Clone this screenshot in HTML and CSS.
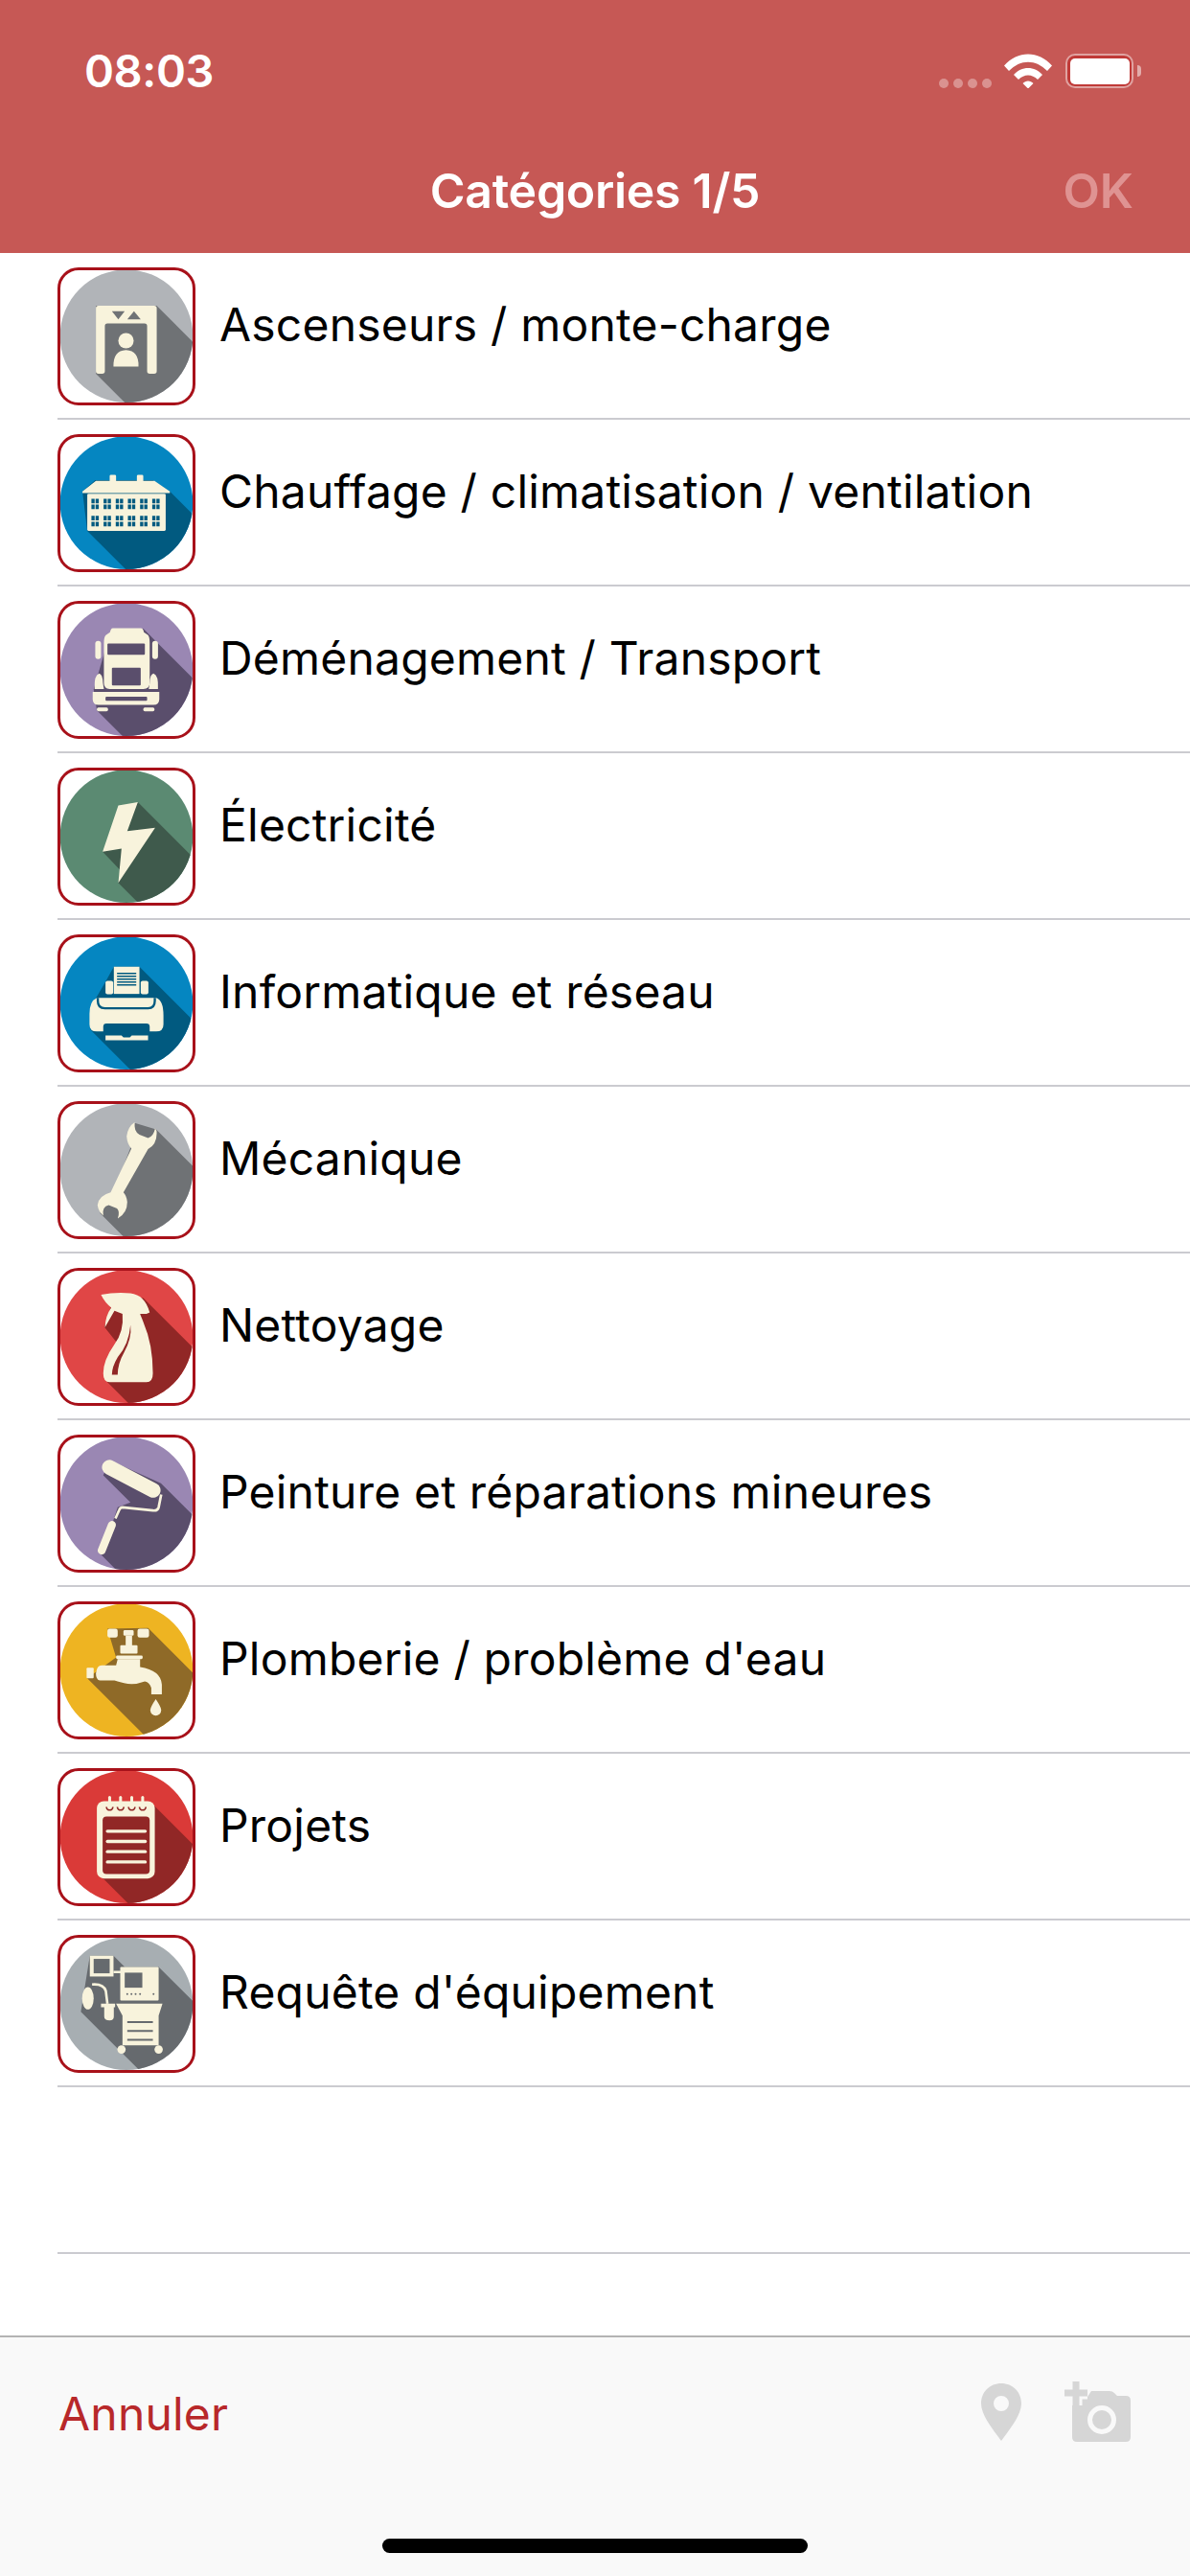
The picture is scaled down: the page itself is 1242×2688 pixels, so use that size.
FILE: index.html
```html
<!DOCTYPE html>
<html lang="fr">
<head>
<meta charset="utf-8">
<title>Catégories</title>
<link rel="stylesheet" href="styles.css">
</head>
<body>
<svg class="defs" width="0" height="0" aria-hidden="true"><defs><clipPath id="disc"><circle cx="215.500" cy="214.500" r="207.500"/></clipPath></defs></svg>
<div class="app">
  <header class="header">
    <div class="status">
      <span class="time">08:03</span>
      <div class="status-icons">
        <div class="signal"><i></i><i></i><i></i><i></i></div>
        <svg class="wifi" viewBox="0 0 50 36"><path d="M0 12.500C14-3.500 36-3.500 50 12.500l-5 5.500C33 5.500 17 5.500 5 18Z"/><path d="M10 22C18 12.500 32 12.500 40 22l-5 5C29 21 21 21 15 27Z"/><path d="M19.500 31C22.500 27.500 27.500 27.500 30.500 31L25 36.500Z"/></svg>
        <div class="battery"><div class="battery-fill"></div></div>
        <div class="battery-cap"></div>
      </div>
    </div>
    <div class="nav">
      <span class="nav-title">Catégories 1/5</span>
      <span class="nav-ok">OK</span>
    </div>
  </header>

  <main class="list">
    <div class="row">
      <div class="icon"><svg viewBox="0 0 428 428"><circle class="c-grey" cx="215.500" cy="214.500" r="207.500"/><g clip-path="url(#disc)"><g transform="translate(-62,-43)">
        <polygon class="s-grey" points="182,163 372,163 660,451 660,660 467,660 182,375"/>
        <path class="g" d="M190 163H364q8 0 8 8V367q0 8-8 8H350q-8 0-8-8V226q0-8-8-8H218q-8 0-8 8V367q0 8-8 8H190q-8 0-8-8V171q0-8 8-8Z"/>
        <polygon class="s-grey" points="232,180 272,180 252,205"/><polygon class="s-grey" points="280,205 322,205 301,180"/>
        <circle class="g" cx="276" cy="272" r="24"/><path class="g" d="M237 353q-2-50 39-52q41 2 39 52Z"/>
      </g></g></svg></div>
      <span class="label">Ascenseurs / monte-charge</span>
    </div>
    <div class="row">
      <div class="icon"><svg viewBox="0 0 428 428"><circle class="c-blue" cx="215.500" cy="214.500" r="207.500"/><g clip-path="url(#disc)"><g transform="translate(-62,-566)">
        <polygon class="s-blue" points="140,745 180,710 360,710 413,745 700,1032 700,1100 387,1100 155,868"/>
        <path class="g" d="M140 745L182 712H225V697q0-4 4-4h12q4 0 4 4V712H310V697q0-4 4-4h12q4 0 4 4V712H365L413 745V750H140Z"/>
        <rect class="g" x="155" y="752" width="245" height="116" rx="4"/>
        <g class="win"><path d="M168 775H388"/><path d="M168 793H388"/><path d="M168 828H388"/><path d="M168 847H388"/></g>
      </g></g></svg></div>
      <span class="label">Chauffage / climatisation / ventilation</span>
    </div>
    <div class="row">
      <div class="icon"><svg viewBox="0 0 428 428"><circle class="c-purple" cx="215.500" cy="214.500" r="207.500"/><g clip-path="url(#disc)"><g transform="translate(-62,-53)">
        <polygon class="s-purple" points="230,140 330,140 735,545 585,795 185,395 175,330"/>
        <path class="g" d="M235 138H322q8 0 10 13L345 160Q350 165 350 185V310Q350 328 330 328H225Q207 328 207 310V185Q207 165 213 160L226 151Q228 138 235 138Z"/>
        <rect class="s-purple" x="218" y="186" width="117" height="35" rx="3"/>
        <rect class="s-purple" x="232" y="262" width="90" height="55" rx="3"/>
        <rect class="g" x="180" y="178" width="18" height="57" rx="9"/><rect class="g" x="358" y="178" width="18" height="57" rx="9"/>
        <path class="g" d="M178 328Q176 285 192 280Q203 282 204 310L207 328Z"/><path class="g" d="M376 328Q378 285 362 280Q351 282 350 310L347 328Z"/>
        <path class="g" d="M172 337H380V360Q380 378 362 378H190Q172 378 172 360Z"/>
        <rect class="s-purple" x="212" y="352" width="130" height="13" rx="3"/>
        <rect class="g" x="185" y="386" width="35" height="12" rx="5"/><rect class="g" x="330" y="386" width="35" height="12" rx="5"/>
      </g></g></svg></div>
      <span class="label">Déménagement / Transport</span>
    </div>
    <div class="row">
      <div class="icon"><svg viewBox="0 0 428 428"><circle class="c-green" cx="215.500" cy="214.500" r="207.500"/><g clip-path="url(#disc)"><g transform="translate(-62,-575)">
        <polygon class="s-green" points="313,683 713,1083 652,1335 252,935 258,895 203,838"/>
        <polygon class="g" points="252,693 313,683 280,773 367,763 252,935 262,828 203,838"/>
      </g></g></svg></div>
      <span class="label">Électricité</span>
    </div>
    <div class="row">
      <div class="icon"><svg viewBox="0 0 428 428"><circle class="c-blue" cx="215.500" cy="214.500" r="207.500"/><g clip-path="url(#disc)"><g transform="translate(-62,-77)">
        <polygon class="s-blue" points="238,178 318,178 718,578 565,775 165,375 180,280 212,225"/>
        <rect class="g" x="212" y="222" width="24" height="42" rx="6"/><rect class="g" x="322" y="222" width="24" height="42" rx="6"/>
        <rect class="g" x="238" y="178" width="80" height="85"/>
        <g class="plines"><path d="M248 199H308"/><path d="M248 208H308"/><path d="M248 217H308"/><path d="M248 226H308"/><path d="M248 235H308"/></g>
        <path class="g" d="M185 275H370Q393 282 393 330V358Q393 380 370 380H350V365Q350 355 340 355H215Q205 355 205 365V380H185Q162 380 162 358V325Q162 285 185 275Z"/>
        <path class="pcurve" d="M188 275V285Q188 308 210 308H345Q366 308 366 285V275"/>
        <path class="g" d="M212 393H262l6 6h20l6-6H345V408H212Z"/>
      </g></g></svg></div>
      <span class="label">Informatique et réseau</span>
    </div>
    <div class="row">
      <div class="icon"><svg viewBox="0 0 428 428"><circle class="c-grey" cx="215.500" cy="214.500" r="207.500"/><g clip-path="url(#disc)"><g transform="translate(-62,-600)">
        <polygon class="s-grey" points="303,668 370,688 770,1088 595,1350 195,950 250,850 300,720"/>
        <path class="g" d="M303 666Q282 680 278 710Q280 735 293 748L228 885Q190 895 187 925Q190 945 205 958Q200 930 222 925L248 935Q258 945 250 967Q280 950 280 915Q278 895 268 885L345 750Q372 735 372 700Q372 690 367 685Q362 710 345 715L318 705Q300 695 303 666Z"/>
      </g></g></svg></div>
      <span class="label">Mécanique</span>
    </div>
    <div class="row">
      <div class="icon"><svg viewBox="0 0 428 428"><circle class="c-red" cx="215.500" cy="214.500" r="207.500"/><g clip-path="url(#disc)"><g transform="translate(-62,-101)">
        <polygon class="s-red" points="240,190 330,195 730,595 615,855 215,455 260,350 208,285"/>
        <path class="g" d="M198 185Q240 176 290 180Q335 185 350 240L340 245H320Q322 250 330 270Q360 340 360 430Q360 458 340 458H225Q205 458 205 430Q205 390 240 340Q270 300 265 245L240 235L210 287Q212 250 230 225Q210 210 198 185Z"/>
        <path class="s-red" d="M290 280Q285 340 250 380Q232 410 232 435H250Q250 400 270 365Q295 320 290 280Z"/>
      </g></g></svg></div>
      <span class="label">Nettoyage</span>
    </div>
    <div class="row">
      <div class="icon"><svg viewBox="0 0 428 428"><circle class="c-purple" cx="215.500" cy="214.500" r="207.500"/><g clip-path="url(#disc)"><g transform="translate(-62,-623)">
        <polygon class="s-purple" points="225,703 385,775 785,1175 590,1390 190,990 235,895 250,850 290,835 205,750"/>
        <path class="r-handle" d="M224 725L361 797"/>
        <path class="r-wire" d="M386 810L378 850Q375 862 360 860L265 850Q258 850 255 858L243 885"/>
        <path class="r-grip" d="M232 905L200 985"/>
      </g></g></svg></div>
      <span class="label">Peinture et réparations mineures</span>
    </div>
    <div class="row">
      <div class="icon"><svg viewBox="0 0 428 428"><circle class="c-yellow" cx="215.500" cy="214.500" r="207.500"/><g clip-path="url(#disc)"><g transform="translate(-62,-125)">
        <polygon class="s-yellow" points="218,210 345,208 745,608 555,765 155,365 245,300"/>
        <rect class="g" x="218" y="210" width="32" height="28" rx="7"/><rect class="g" x="268" y="215" width="32" height="17" rx="4"/><rect class="g" x="312" y="210" width="36" height="28" rx="7"/>
        <rect class="g" x="275" y="232" width="20" height="34"/><rect class="g" x="258" y="262" width="54" height="26" rx="3"/>
        <rect class="g" x="245" y="294" width="83" height="11" rx="4"/>
        <path class="g" d="M250 305H320V330Q385 340 388 385V415H355V395Q350 378 335 375Q300 388 270 380Q250 375 240 372H195Q182 370 182 350Q185 325 200 325H245Z"/>
        <rect class="g" x="153" y="332" width="22" height="33" rx="3"/>
        <path class="g" d="M369 430Q352 455 352 465A17 17 0 0 0 386 465Q386 455 369 430Z"/>
      </g></g></svg></div>
      <span class="label">Plomberie / problème d'eau</span>
    </div>
    <div class="row">
      <div class="icon"><svg viewBox="0 0 428 428"><circle class="c-crimson" cx="215.500" cy="214.500" r="207.500"/><g clip-path="url(#disc)"><g transform="translate(-62,-47)">
        <polygon class="s-red" points="195,155 365,165 765,565 605,792 205,392"/>
        <rect class="g" x="185" y="150" width="181" height="242" rx="22"/>
        <rect class="s-red" x="203" y="198" width="147" height="180" rx="12"/>
        <g class="n-lines"><path d="M218 244H336"/><path d="M218 276H336"/><path d="M218 308H336"/><path d="M218 340H336"/></g>
        <g class="n-rings"><path d="M225 138V165"/><path d="M259 138V165"/><path d="M294 138V165"/><path d="M328 138V165"/></g>
        <g class="n-holes"><path d="M215 168a10 10 0 0 0 20 0"/><path d="M249 168a10 10 0 0 0 20 0"/><path d="M284 168a10 10 0 0 0 20 0"/><path d="M318 168a10 10 0 0 0 20 0"/></g>
      </g></g></svg></div>
      <span class="label">Projets</span>
    </div>
    <div class="row">
      <div class="icon"><svg viewBox="0 0 428 428"><circle class="c-steel" cx="215.500" cy="214.500" r="207.500"/><g clip-path="url(#disc)"><g transform="translate(-62,-570)">
        <polygon class="s-steel" points="163,635 237,635 272,670 378,670 778,1070 535,1210 135,810"/>
        <rect class="g" x="163" y="635" width="74" height="65"/><rect class="s-steel" x="175" y="645" width="50" height="45"/>
        <path class="e-tube" d="M237 686H260"/>
        <rect class="g" x="258" y="670" width="120" height="105" rx="3"/>
        <rect class="s-steel" x="272" y="688" width="55" height="47"/>
        <g class="e-dots"><circle cx="280" cy="755" r="3"/><circle cx="293" cy="755" r="3"/><circle cx="306" cy="755" r="3"/><circle cx="320" cy="755" r="3"/><circle cx="362" cy="755" r="3"/></g>
        <path class="g" d="M245 785H390L378 822V915H265V822Z"/>
        <g class="e-lines"><path d="M280 842H360"/><path d="M280 870H360"/><path d="M280 898H360"/></g>
        <circle class="g" cx="262" cy="928" r="13"/><circle class="g" cx="378" cy="928" r="13"/>
        <ellipse class="g" cx="157" cy="768" rx="18" ry="35"/>
        <path class="e-tube" d="M170 725Q205 722 213 745L218 785"/>
        <path class="g" d="M198 785H242V796H238V825Q238 837 225 837Q208 837 208 825V796H198Z"/>
      </g></g></svg></div>
      <span class="label">Requête d'équipement</span>
    </div>
    <div class="row"></div>
  </main>

  <footer class="toolbar">
    <span class="cancel">Annuler</span>
    <div class="tools">
      <svg class="pin" viewBox="0 0 42 60"><path fill-rule="evenodd" d="M21 0C9 0 0 9 0 21C0 34 14 50 21 60C28 50 42 34 42 21C42 9 33 0 21 0ZM21 13a8 8 0 1 1 0 16a8 8 0 1 1 0-16Z"/></svg>
      <svg class="camera" viewBox="0 0 70 64"><path d="M8 22Q8 16 14 16H24L28 10H47Q50 10 52 12L55 15H64Q69 15 69 20V58Q69 63 64 63H13Q8 63 8 58Z"/><path class="cam-gap" d="M12 0V25M0 12H24"/><path class="cam-plus" d="M12 0V25M0 12H24"/><circle class="cam-ring" cx="39" cy="40" r="12.500"/></svg>
    </div>
    <div class="home"></div>
  </footer>
</div>
</body>
</html>
```
FILE: styles.css
```css
* { box-sizing: border-box; }
html, body { margin: 0; padding: 0; background: #fff; }
body { font-family: Inter, Roboto, "Liberation Sans", sans-serif; color: #000; }
.defs { position: absolute; }
.app { width: 1242px; height: 2688px; display: flex; flex-direction: column; overflow: hidden; }

.header { height: 264px; background: #c65855; color: #fff; display: flex; flex-direction: column; flex: none; }
.status { height: 169px; padding: 50px 51px 0 88px; display: flex; justify-content: space-between; align-items: flex-start; }
.time { font-size: 47px; font-weight: 600; line-height: 48px; letter-spacing: -0.4px; }
.status-icons { display: flex; align-items: flex-start; padding-top: 6px; }
.signal { display: flex; gap: 5px; margin: 26px 13px 0 0; }
.signal i { width: 10px; height: 10px; border-radius: 50%; background: rgba(255,255,255,.35); }
.wifi { width: 50px; height: 36px; fill: #fff; margin-right: 14px; }
.battery { width: 71px; height: 36px; border: 2.5px solid rgba(255,255,255,.45); border-radius: 10px; padding: 2.5px; background: #c03a38; background-clip: padding-box; }
.battery-fill { width: 100%; height: 100%; background: #fff; border-radius: 5px; }
.battery-cap { width: 4px; height: 12px; margin: 12px 0 0 4px; background: rgba(255,255,255,.5); border-radius: 0 4px 4px 0; }

.nav { position: relative; display: flex; justify-content: center; }
.nav-title { font-size: 50px; font-weight: 600; line-height: 60px; letter-spacing: -0.3px; }
.nav-ok { position: absolute; right: 59px; top: 0; font-size: 50px; font-weight: 600; line-height: 60px; color: #df9392; }

.list { flex: 1; }
.row { height: 174px; margin-left: 60px; display: flex; align-items: center; border-bottom: 2px solid #cbcbd0; }
.icon { width: 144px; height: 144px; flex: none; border: 3px solid #a8111a; border-radius: 22px; margin-top: 1px; overflow: hidden; background: #fff; }
.icon svg { display: block; width: 143px; height: 143px; margin: -3px; }
.label { font-size: 48px; line-height: 60px; margin: 0 0 22px 25px; letter-spacing: 0.2px; white-space: nowrap; }

.g { fill: #f8f3dc; }
.c-grey { fill: #b1b4b8; } .s-grey { fill: #6f7275; }
.c-blue { fill: #0586c1; } .s-blue { fill: #015a80; }
.c-purple { fill: #9a87b3; } .s-purple { fill: #5a4e6c; }
.c-green { fill: #5b8a72; } .s-green { fill: #3f5a4c; }
.c-red { fill: #e04646; } .s-red { fill: #912726; }
.c-crimson { fill: #da3a38; }
.c-yellow { fill: #eeb422; } .s-yellow { fill: #8f6a28; }
.c-steel { fill: #a7aeb2; } .s-steel { fill: #666a6e; }

.win { fill: none; stroke: #015a80; stroke-width: 14; stroke-dasharray: 10 3 10 15; }
.plines { fill: none; stroke: #015a80; stroke-width: 4; }
.pcurve { fill: none; stroke: #015a80; stroke-width: 7; }
.r-handle { fill: none; stroke: #f8f3dc; stroke-width: 46; stroke-linecap: round; }
.r-wire { fill: none; stroke: #f8f3dc; stroke-width: 8; }
.r-grip { fill: none; stroke: #f8f3dc; stroke-width: 25; stroke-linecap: round; }
.n-lines { fill: none; stroke: #f8f3dc; stroke-width: 10; stroke-linecap: round; }
.n-rings { fill: none; stroke: #f8f3dc; stroke-width: 9; stroke-linecap: round; }
.n-holes { fill: none; stroke: #912726; stroke-width: 5; }
.e-tube { fill: none; stroke: #f8f3dc; stroke-width: 8; }
.e-dots { fill: #666a6e; }
.e-lines { fill: none; stroke: #666a6e; stroke-width: 6; }

.toolbar { position: relative; flex: none; height: 251px; background: #f9f9f9; border-top: 2px solid #b3b3b3; padding: 46px 61px 0 61px; display: flex; justify-content: space-between; align-items: flex-start; }
.cancel { font-size: 48px; line-height: 60px; color: #b8282a; margin-top: 4px; letter-spacing: 0.2px; }
.tools { display: flex; align-items: flex-start; gap: 45px; }
.pin { width: 42px; height: 60px; fill: #d6d6d6; margin-top: 2px; }
.camera { width: 70px; height: 64px; fill: #d6d6d6; }
.cam-gap { fill: none; stroke: #f9f9f9; stroke-width: 13; }
.cam-plus { fill: none; stroke: #d6d6d6; stroke-width: 7; }
.cam-ring { fill: #d6d6d6; stroke: #f9f9f9; stroke-width: 5; }
.home { position: absolute; left: 399px; bottom: 24px; width: 444px; height: 15px; background: #000; border-radius: 8px; }
```
